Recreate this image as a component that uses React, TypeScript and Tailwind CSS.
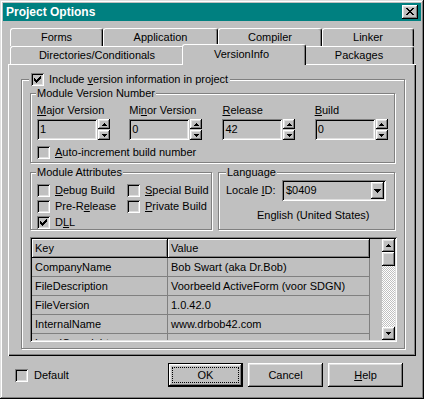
import React from "react";

const raised =
  "shadow-[inset_-1px_-1px_#000,inset_1px_1px_#fff,inset_-2px_-2px_#808080,inset_2px_2px_#dfdfdf]";
const sunken =
  "shadow-[inset_1px_1px_#808080,inset_-1px_-1px_#fff,inset_2px_2px_#000,inset_-2px_-2px_#dfdfdf]";
const header = "shadow-[inset_-1px_-1px_#000,inset_1px_1px_#fff,inset_-2px_-2px_#808080]";
const etched = "border border-[#808080] shadow-[inset_1px_1px_#fff,1px_1px_#fff]";
const tab =
  "h-[18px] bg-[#c0c0c0] border-t border-l border-r border-t-white border-l-white border-r-black rounded-t-[3px] shadow-[inset_-1px_0_#808080] flex items-center justify-center";

function Up() {
  return (
    <svg width="5" height="3" viewBox="0 0 5 3" shapeRendering="crispEdges">
      <path d="M2 0h1v1h1v1h1v1H0V2h1V1h1z" fill="#000" />
    </svg>
  );
}

function Down({ w = 5 }: { w?: number }) {
  if (w === 7)
    return (
      <svg width="7" height="4" viewBox="0 0 7 4" shapeRendering="crispEdges">
        <path d="M0 0h7v1H6v1H5v1H4v1H3V3H2V2H1V1H0z" fill="#000" />
      </svg>
    );
  return (
    <svg width="5" height="3" viewBox="0 0 5 3" shapeRendering="crispEdges">
      <path d="M0 0h5v1H4v1H3v1H2V2H1V1H0z" fill="#000" />
    </svg>
  );
}

function Check({ checked }: { checked?: boolean }) {
  return (
    <span className={`w-[13px] h-[13px] shrink-0 bg-[#c0c0c0] ${sunken} flex items-center justify-center`}>
      {checked && (
        <svg width="7" height="7" viewBox="0 0 7 7" shapeRendering="crispEdges">
          <path d="M0 2h1v1h1v1h1V3h1V2h1V1h1V0h1v3H6v1H5v1H4v1H3v1H2V6H1V5H0z" fill="#000" />
        </svg>
      )}
    </span>
  );
}

function Group({
  label,
  legend,
  className,
  children,
}: {
  label: React.ReactNode;
  legend: string;
  className: string;
  children: React.ReactNode;
}) {
  return (
    <div className={`relative ${etched} ${className}`}>
      <div className={`absolute -top-[7px] h-[13px] bg-[#c0c0c0] flex items-center ${legend}`}>{label}</div>
      {children}
    </div>
  );
}

function SpinEdit({ value }: { value: string }) {
  return (
    <div className="flex mt-[2px]">
      <div className={`w-[60px] h-[21px] ${sunken} flex items-center pl-[3px]`}>{value}</div>
      <div className="flex flex-col w-[12px] h-[21px] ml-[1px] gap-[1px]">
        <div className={`flex-1 bg-[#c0c0c0] ${raised} flex items-center justify-center`}>
          <Up />
        </div>
        <div className={`flex-1 bg-[#c0c0c0] ${raised} flex items-center justify-center`}>
          <Down />
        </div>
      </div>
    </div>
  );
}

const rows = [
  ["CompanyName", "Bob Swart (aka Dr.Bob)"],
  ["FileDescription", "Voorbeeld ActiveForm (voor SDGN)"],
  ["FileVersion", "1.0.42.0"],
  ["InternalName", "www.drbob42.com"],
  ["LegalCopyright", ""],
];

export default function App() {
  return (
    <div className="w-[424px] h-[399px] bg-[#c0c0c0] p-[3px] flex flex-col text-black text-[11px] leading-[13px] font-['Liberation_Sans',Arial,sans-serif] shadow-[inset_-1px_-1px_#000,inset_1px_1px_#dfdfdf,inset_-2px_-2px_#808080,inset_2px_2px_#fff]">
      {/* title bar */}
      <div className="h-[18px] shrink-0 bg-[#008080] flex items-center justify-between pl-[3px] pr-[3px]">
        <span className="text-white font-bold text-[12px]">Project Options</span>
        <div className={`w-[16px] h-[14px] bg-[#c0c0c0] ${raised} flex items-center justify-center pb-[1px]`}>
          <svg width="8" height="7" viewBox="0 0 8 7" shapeRendering="crispEdges">
            <path
              d="M0 0h2v1h1v1h2V1h1V0h2v1H7v1H6v1H5v1h1v1h1v1h1v1H6V6H5V5H3v1H2v1H0V6h1V5h1V4h1V3H2V2H1V1H0z"
              fill="#000"
            />
          </svg>
        </div>
      </div>

      {/* tabs */}
      <div className="flex ml-[7px] mt-[7px]">
        <div className={`${tab} w-[93px]`}>Forms</div>
        <div className={`${tab} w-[115px]`}>Application</div>
        <div className={`${tab} w-[104px]`}>Compiler</div>
        <div className={`${tab} w-[92px]`}>Linker</div>
      </div>
      <div className="flex ml-[7px]">
        <div className={`${tab} w-[174px]`}>Directories/Conditionals</div>
        <div className={`${tab} relative z-10 w-[124px] -mx-[2px] -mt-[2px] -mb-[1px] h-[21px] pr-[5px] pb-[2px]`}>
          VersionInfo
        </div>
        <div className={`${tab} w-[110px]`}>Packages</div>
      </div>

      {/* page */}
      <div className="ml-[5px] w-[408px] h-[292px] pt-[15px] pl-[13px] shadow-[inset_1px_1px_#fff,inset_-1px_-1px_#000,inset_-2px_-2px_#808080]">
        <Group
          className="w-[384px] h-[270px] pl-[8px] pt-[13px]"
          legend="left-[7px] px-[2px] gap-[5px]"
          label={
            <>
              <Check checked />
              <span>
                Include <u>v</u>ersion information in project
              </span>
            </>
          }
        >
          <Group className="w-[365px] h-[70px] pl-[6px] pt-[10px]" legend="left-[5px] px-[1px]" label="Module Version Number">
            <div className="flex">
              <div className="w-[93px]">
                <div>
                  <u>M</u>ajor Version
                </div>
                <SpinEdit value="1" />
              </div>
              <div className="w-[94px]">
                <div>
                  Mi<u>n</u>or Version
                </div>
                <SpinEdit value="0" />
              </div>
              <div className="w-[93px]">
                <div>
                  <u>R</u>elease
                </div>
                <SpinEdit value="42" />
              </div>
              <div className="w-[80px]">
                <div>
                  <u>B</u>uild
                </div>
                <SpinEdit value="0" />
              </div>
            </div>
            <div className="flex items-center gap-[5px] mt-[6px]">
              <Check />
              <span>
                <u>A</u>uto-increment build number
              </span>
            </div>
          </Group>

          <div className="flex gap-[6px] mt-[9px]">
            <Group className="w-[182px] h-[58px] pl-[6px] pt-[11px]" legend="left-[5px] px-[1px]" label="Module Attributes">
              <div className="flex flex-col gap-[3px]">
                <div className="flex">
                  <div className="w-[90px] flex items-center gap-[5px]">
                    <Check />
                    <span>
                      <u>D</u>ebug Build
                    </span>
                  </div>
                  <div className="flex items-center gap-[5px]">
                    <Check />
                    <span>
                      <u>S</u>pecial Build
                    </span>
                  </div>
                </div>
                <div className="flex">
                  <div className="w-[90px] flex items-center gap-[5px]">
                    <Check />
                    <span>
                      Pre-R<u>e</u>lease
                    </span>
                  </div>
                  <div className="flex items-center gap-[5px]">
                    <Check />
                    <span>
                      <u>P</u>rivate Build
                    </span>
                  </div>
                </div>
                <div className="flex items-center gap-[5px]">
                  <Check checked />
                  <span>
                    D<u>L</u>L
                  </span>
                </div>
              </div>
            </Group>
            <Group className="w-[177px] h-[58px] pl-[7px] pt-[7px]" legend="left-[7px] px-[1px]" label="Language">
              <div className="flex items-center">
                <span className="w-[56px]">
                  Locale <u>I</u>D:
                </span>
                <div className={`w-[104px] h-[21px] ${sunken} flex items-center justify-between pl-[4px] pr-[2px]`}>
                  <span>$0409</span>
                  <div className={`w-[13px] h-[17px] bg-[#c0c0c0] ${raised} flex items-center justify-center`}>
                    <Down w={7} />
                  </div>
                </div>
              </div>
              <div className="mt-[8px] ml-[31px]">English (United States)</div>
            </Group>
          </div>

          {/* version info grid */}
          <div className={`mt-[7px] w-[367px] h-[105px] p-[2px] ${sunken} flex`}>
            <div className="flex-1 overflow-hidden">
              <div className="flex h-[19px]">
                <div className={`w-[136px] ${header} pl-[3px] flex items-center`}>Key</div>
                <div className={`w-[202px] ${header} pl-[3px] flex items-center`}>Value</div>
              </div>
              {rows.map(([k, v]) => (
                <div key={k} className="flex h-[19px]">
                  <div className="w-[136px] border-r border-b border-[#808080] pl-[3px] flex items-center">{k}</div>
                  <div className="w-[202px] border-r border-b border-[#808080] pl-[3px] flex items-center">{v}</div>
                </div>
              ))}
            </div>
            <div className="w-[13px] flex flex-col">
              <div className={`h-[13px] bg-[#c0c0c0] ${raised} flex items-center justify-center`}>
                <Up />
              </div>
              <div className={`h-[14px] bg-[#c0c0c0] ${raised}`} />
              <div className="flex-1 bg-[repeating-conic-gradient(#fff_0_25%,#c0c0c0_0_50%)] bg-[length:2px_2px]" />
              <div className={`h-[13px] bg-[#c0c0c0] ${raised} flex items-center justify-center`}>
                <Down />
              </div>
            </div>
          </div>
        </Group>
      </div>

      {/* bottom buttons */}
      <div className="flex items-center mt-[7px] h-[24px] pl-[12px] pr-[18px]">
        <div className="flex items-center gap-[6px]">
          <Check />
          <span>Default</span>
        </div>
        <div className="ml-auto flex gap-[5px]">
          <div className={`w-[75px] h-[24px] border border-black p-[3px] flex ${raised}`}>
            <div className="flex-1 border border-dotted border-black flex items-center justify-center">OK</div>
          </div>
          <div className={`w-[75px] h-[24px] ${raised} flex items-center justify-center`}>Cancel</div>
          <div className={`w-[75px] h-[24px] ${raised} flex items-center justify-center`}>
            <span>
              <u>H</u>elp
            </span>
          </div>
        </div>
      </div>
    </div>
  );
}
